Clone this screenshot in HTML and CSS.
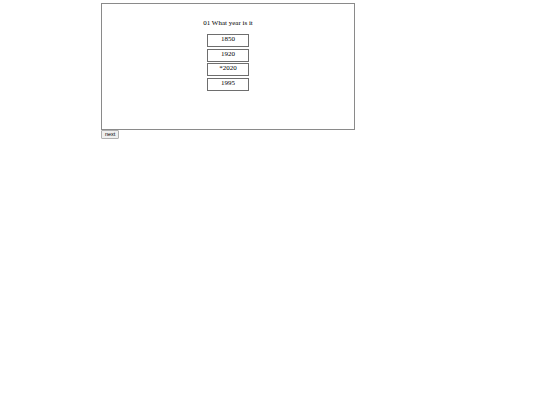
FILE: index.html
```html
<!DOCTYPE html>
<html>
<head>
<meta charset="utf-8">
<link rel="stylesheet" href="styles.css">
</head>
<body>
<div class="frame">
  <div class="question">01 What year is it</div>
  <div class="options">
    <div class="option">1850</div>
    <div class="option">1920</div>
    <div class="option">*2020</div>
    <div class="option">1995</div>
  </div>
</div>
<button class="next">next</button>
</body>
</html>
```
FILE: styles.css
```css
html, body {
  margin: 0;
  padding: 0;
  background: #fff;
}
body {
  padding: 3px 0 0 101px;
  font-family: "Liberation Serif", "Times New Roman", serif;
  font-size: 7px;
  color: #000;
}
.frame {
  width: 252px;
  border: 1px solid #8a8a8a;
  display: flex;
  flex-direction: column;
  align-items: center;
  padding-top: 15px;
  box-sizing: content-box;
  height: 110px;
}
.question {
  line-height: 8px;
  height: 8px;
  margin-bottom: 7px;
}
.options {
  display: flex;
  flex-direction: column;
  gap: 1.5px;
}
.option {
  width: 40px;
  height: 11px;
  border: 1px solid #6e6e6e;
  text-align: center;
  line-height: 8px;
}
.next {
  display: block;
  margin: 0;
  padding: 0 3px;
  height: 9px;
  font-family: "Liberation Sans", Arial, sans-serif;
  font-size: 5.5px;
  line-height: 7px;
  border: 1px solid #b0b0b0;
  background: #efefef;
  color: #000;
  border-radius: 1px;
}
```
